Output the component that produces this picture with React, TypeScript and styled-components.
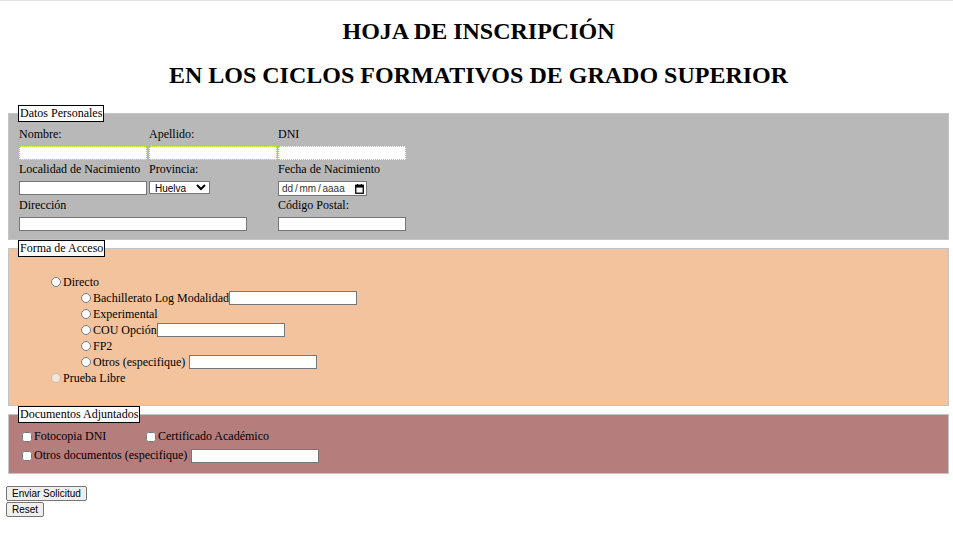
import React from 'react';
import styled, { createGlobalStyle } from 'styled-components';

const GlobalStyle = createGlobalStyle`
  html {
    border-top: 1px solid #e3e3e3;
  }
  body {
    margin: 6px 2px 6px 6px;
    font-family: "Liberation Serif", "Times New Roman", serif;
    font-size: 12px;
    color: #000;
    background: #fff;
  }
`;

const Title = styled.h1`
  margin: 16px 0;
  font-size: 24px;
  line-height: 27.6px;
  font-weight: bold;
  text-align: center;

  &:first-of-type {
    margin-top: 11px;
  }
`;

const Group = styled.fieldset<{ $bg: string; $padTop?: number; $padBottom?: number }>`
  margin: 0 2px;
  padding: ${({ $padTop }) => $padTop ?? 5}px 9px ${({ $padBottom }) => $padBottom ?? 7}px 10px;
  border: 1px solid #c4c4c4;
  background: ${({ $bg }) => $bg};
  min-width: 0;
`;

const Legend = styled.legend`
  margin-left: -1px;
  padding: 0 1px;
  border: 1px solid #000;
  background: #fff;
  line-height: 15px;
`;

const PersonalGrid = styled.div`
  display: grid;
  grid-template-columns: 130px 129px 130px;
`;

const Field = styled.div<{ $span?: number }>`
  grid-column: span ${({ $span }) => $span ?? 1};
  margin-bottom: 2px;
`;

const FieldLabel = styled.label`
  display: block;
  line-height: 14px;
  margin-bottom: 5px;
  white-space: nowrap;
`;

const TextInput = styled.input<{ $width?: number; $dotted?: boolean }>`
  box-sizing: border-box;
  width: ${({ $width }) => $width ?? 128}px;
  height: 14px;
  margin: 0;
  padding: 0 2px;
  border: 1px ${({ $dotted }) => ($dotted ? 'dotted #9be600' : 'solid #767676')};
  background: #fff;
  font: 10px "Liberation Sans", Arial, sans-serif;
  display: block;
  flex: none;
`;

const Select = styled.select`
  box-sizing: border-box;
  width: 61px;
  height: 13px;
  margin: 0;
  padding: 0 0 0 1px;
  border: 1px solid #767676;
  border-radius: 0;
  background: #fff;
  font: 10px "Liberation Sans", Arial, sans-serif;
  color: #000;
`;

const DateBox = styled.div`
  box-sizing: border-box;
  width: 89px;
  height: 15px;
  padding: 0 2px 0 3px;
  border: 1px solid #767676;
  background: #fff;
  display: flex;
  align-items: center;
  justify-content: space-between;
  font: 10px "Liberation Sans", Arial, sans-serif;
  color: #333;
  word-spacing: -1px;
`;

const OptionList = styled.ul<{ $nested?: boolean }>`
  list-style: none;
  margin: ${({ $nested }) => ($nested ? '0' : '12px 0 9px')};
  padding: 0 0 0 30px;
`;

const OptionRow = styled.label`
  display: flex;
  align-items: center;
  height: 16px;
  white-space: nowrap;
`;

const Radio = styled.input.attrs({ type: 'radio' })`
  width: 10px;
  height: 10px;
  margin: 0 2px 0 2px;
  flex: none;
`;

const Check = styled.input.attrs({ type: 'checkbox' })`
  width: 10px;
  height: 10px;
  margin: 0 2px 0 3px;
  flex: none;
`;

const Spacer = styled.span`
  width: 4px;
  flex: none;
`;

const DocGrid = styled.div`
  display: grid;
  grid-template-columns: 124px auto;
  justify-content: start;
`;

const DocCell = styled.label<{ $span?: number }>`
  grid-column: span ${({ $span }) => $span ?? 1};
  display: flex;
  align-items: center;
  height: 19px;
  white-space: nowrap;
`;

const Actions = styled.div`
  display: flex;
  flex-direction: column;
  align-items: flex-start;
  gap: 1px;
  margin-top: 12px;
`;

const Button = styled.button`
  box-sizing: border-box;
  height: 15px;
  margin: 0;
  padding: 0 5px;
  border: 1px solid #767676;
  border-radius: 2px;
  background: #efefef;
  font: 10px "Liberation Sans", Arial, sans-serif;
  color: #000;
  line-height: 13px;
`;

const CalendarIcon = () => (
  <svg width="9" height="10" viewBox="0 0 9 10">
    <rect x="0.75" y="1.25" width="7.5" height="8" fill="none" stroke="#000" strokeWidth="1.3" />
    <rect x="0.75" y="1.25" width="7.5" height="2.3" fill="#000" />
    <rect x="2" y="0" width="1.2" height="2" fill="#000" />
    <rect x="5.8" y="0" width="1.2" height="2" fill="#000" />
  </svg>
);

const bachillerato = [
  { label: 'Bachillerato Log Modalidad', input: true, gap: false },
  { label: 'Experimental', input: false, gap: false },
  { label: 'COU Opción', input: true, gap: false },
  { label: 'FP2', input: false, gap: false },
  { label: 'Otros (especifique)', input: true, gap: true },
];

export default function App() {
  return (
    <>
      <GlobalStyle />
      <Title>HOJA DE INSCRIPCIÓN</Title>
      <Title>EN LOS CICLOS FORMATIVOS DE GRADO SUPERIOR</Title>
      <form onSubmit={(e) => e.preventDefault()}>
        <Group $bg="#b8b8b8" $padBottom={6}>
          <Legend>Datos Personales</Legend>
          <PersonalGrid>
            <Field>
              <FieldLabel>Nombre:</FieldLabel>
              <TextInput $dotted />
            </Field>
            <Field>
              <FieldLabel>Apellido:</FieldLabel>
              <TextInput $dotted />
            </Field>
            <Field>
              <FieldLabel>DNI</FieldLabel>
              <TextInput $dotted />
            </Field>
            <Field>
              <FieldLabel>Localidad de Nacimiento</FieldLabel>
              <TextInput />
            </Field>
            <Field>
              <FieldLabel>Provincia:</FieldLabel>
              <Select defaultValue="Huelva">
                <option>Almería</option>
                <option>Cádiz</option>
                <option>Córdoba</option>
                <option>Granada</option>
                <option>Huelva</option>
                <option>Jaén</option>
                <option>Málaga</option>
                <option>Sevilla</option>
              </Select>
            </Field>
            <Field>
              <FieldLabel>Fecha de Nacimiento</FieldLabel>
              <DateBox>
                <span>dd / mm / aaaa</span>
                <CalendarIcon />
              </DateBox>
            </Field>
            <Field $span={2}>
              <FieldLabel>Dirección</FieldLabel>
              <TextInput $width={228} />
            </Field>
            <Field>
              <FieldLabel>Código Postal:</FieldLabel>
              <TextInput />
            </Field>
          </PersonalGrid>
        </Group>

        <Group $bg="#f2c39d" $padBottom={10}>
          <Legend>Forma de Acceso</Legend>
          <OptionList>
            <li>
              <OptionRow>
                <Radio name="acceso" />
                Directo
              </OptionRow>
              <OptionList $nested>
                {bachillerato.map((opt) => (
                  <li key={opt.label}>
                    <OptionRow>
                      <Radio name="directo" />
                      {opt.label}
                      {opt.gap && <Spacer />}
                      {opt.input && <TextInput />}
                    </OptionRow>
                  </li>
                ))}
              </OptionList>
            </li>
            <li>
              <OptionRow>
                <Radio name="acceso" disabled />
                Prueba Libre
              </OptionRow>
            </li>
          </OptionList>
        </Group>

        <Group $bg="#b57e7d" $padTop={4} $padBottom={8}>
          <Legend>Documentos Adjuntados</Legend>
          <DocGrid>
            <DocCell>
              <Check />
              Fotocopia DNI
            </DocCell>
            <DocCell>
              <Check />
              Certificado Académico
            </DocCell>
            <DocCell $span={2}>
              <Check />
              Otros documentos (especifique)
              <Spacer />
              <TextInput />
            </DocCell>
          </DocGrid>
        </Group>

        <Actions>
          <Button type="submit">Enviar Solicitud</Button>
          <Button type="reset">Reset</Button>
        </Actions>
      </form>
    </>
  );
}
